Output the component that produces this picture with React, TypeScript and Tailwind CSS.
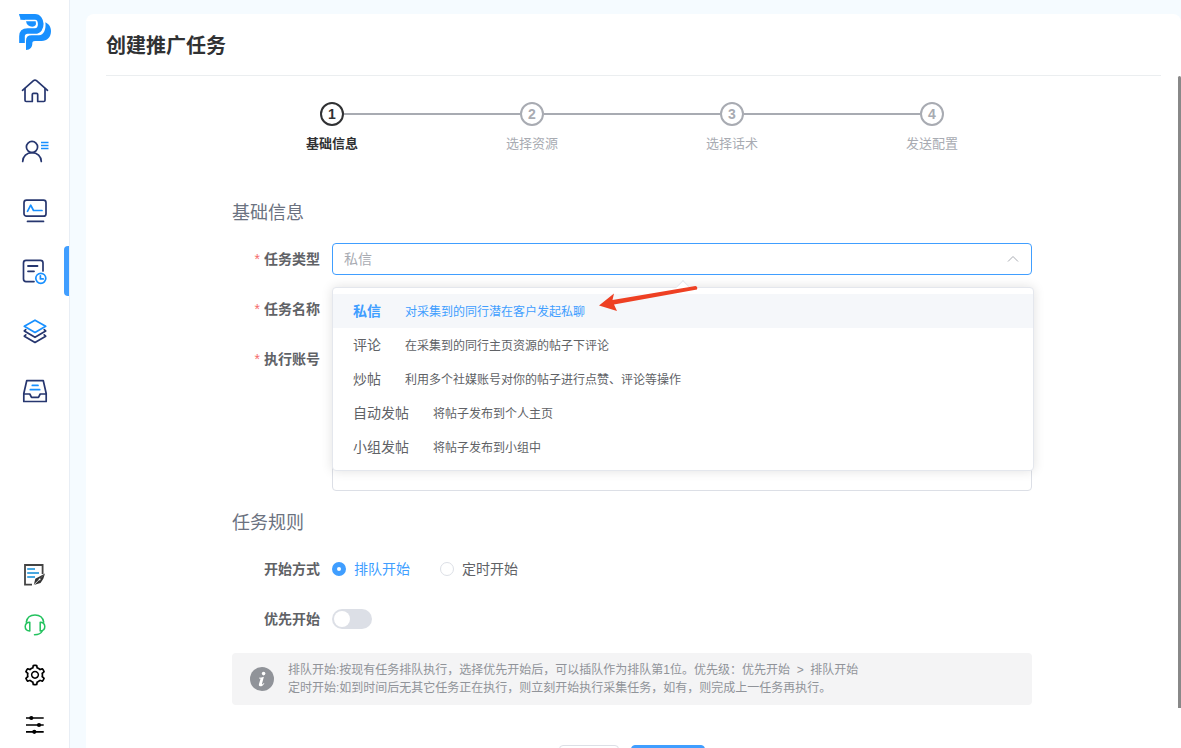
import { useState } from "react";
import type { ReactNode } from "react";
import { AiOutlineSetting } from "react-icons/ai";

const NAVY = "#26366f";
const BLUE = "#1890ff";

const Icon = ({ children }: { children: ReactNode }) => (
  <svg
    className="size-8"
    viewBox="0 0 32 32"
    fill="none"
    stroke={NAVY}
    strokeWidth="1.7"
    strokeLinecap="round"
    strokeLinejoin="round"
    aria-hidden="true"
  >
    {children}
  </svg>
);

const Logo = () => (
  <svg className="h-11 w-10" viewBox="0 0 120 132" fill={BLUE} aria-hidden="true">
    <path
      d="M16 20.5H60C82 20.5 84 63 60 63H38Q21 63 21 79V99"
      fill="none"
      stroke={BLUE}
      strokeWidth="17"
    />
    <path d="M12 12H30V29H26Q14 28 12 12Z" />
    <path d="M33 34H62Q66 50 52 50Q36 50 33 34Z" />
    <path d="M91 37C101 42 108 50 108 63C108 82 96 93 80 93H60Q52 93 52 100C52 112 46 120 33 120V92Q33 76 50 76H72C86 76 94 58 91 37Z" />
  </svg>
);

const mainNav = [
  {
    label: "首页",
    icon: (
      <Icon>
        <path d="M3.5 15.3 14.5 5.7Q16 4.5 17.5 5.7L28.5 15.3" />
        <path d="M6 13.5V25.3Q6 26.5 7.2 26.5H13.3V19.5Q13.3 18.3 14.5 18.3H17.5Q18.7 18.3 18.7 19.5V26.5H24.8Q26 26.5 26 25.3V13.5" />
      </Icon>
    ),
  },
  {
    label: "账号",
    icon: (
      <Icon>
        <circle cx="13" cy="12" r="5.6" />
        <path d="M3.7 26.5C3.7 21.5 7.8 17.6 13 17.6S22.3 21.5 22.3 26.5" />
        <path d="M22 7.5H29.5M22 10.5H29.5M22 13.5H29.5" stroke={BLUE} strokeWidth="1.3" strokeLinecap="butt" />
      </Icon>
    ),
  },
  {
    label: "监控",
    icon: (
      <Icon>
        <rect x="5" y="5.2" width="22" height="16" rx="2.5" />
        <path d="M8.5 26.4H24.5" />
        <path d="M8.5 16.3 11.7 10.2 14.5 15.5H23" stroke={BLUE} />
      </Icon>
    ),
  },
  {
    label: "任务",
    active: true,
    icon: (
      <Icon>
        <path d="M15 26.6H7Q4.5 26.6 4.5 24.1V7.9Q4.5 5.4 7 5.4H21.5Q24 5.4 24 7.9V16" />
        <path d="M9 11H18.5M9 16.3H15" strokeWidth="1.8" />
        <circle cx="21.8" cy="23.3" r="5" stroke={BLUE} />
        <path d="M21.4 20.8V23.9H24.2" stroke={BLUE} />
      </Icon>
    ),
  },
  {
    label: "资源",
    icon: (
      <Icon>
        <path d="M6.8 19.9 5.3 21.2 16 27.5 26.7 21.2 25.2 19.9" />
        <path d="M6.8 14.7 5.3 16 16 22.3 26.7 16 25.2 14.7" />
        <path d="M16 5.2 26.7 11.3 16 17.4 5.3 11.3Z" stroke={BLUE} />
      </Icon>
    ),
  },
  {
    label: "收件箱",
    icon: (
      <Icon>
        <path d="M7.7 5.7H24.3L27.2 18.5V26.5H4.8V18.5Z" />
        <path d="M4.8 19H10.8L12.5 22.3H19.5L21.2 19H27.2" />
        <path d="M13.3 10.4H19M11.3 14.7H20.7" stroke={BLUE} />
      </Icon>
    ),
  },
];

const toolNav = [
  {
    label: "编辑",
    icon: (
      <Icon>
        <path d="M13 25.7H6V6H23.6V15" stroke="#444" strokeLinecap="butt" strokeLinejoin="miter" strokeWidth="1.8" />
        <path d="M8.2 10H16M8.2 14H20M8.2 18H16" stroke="#4aa8e0" strokeLinecap="butt" strokeWidth="1.9" />
        <path d="M26 14.5 14.8 26 16.3 19.8 20.5 17.5Z" fill="#333" stroke="none" />
        <path d="M26 14.5 14.8 26 21.5 24 24.3 19.8Z" fill="#333" stroke="none" />
        <path d="M15 25.8 20.3 20.6" stroke="#fff" strokeWidth="0.7" />
        <circle cx="20.6" cy="20.4" r="0.9" fill="#fff" stroke="none" />
      </Icon>
    ),
  },
  {
    label: "客服",
    icon: (
      <Icon>
        <g stroke="#23c25e" strokeWidth="1.5">
          <path d="M7.3 13.2C8 9 11.3 6.1 16 6.1S24 9 24.7 13.2" />
          <path d="M10.8 13.2V22C8 22 6.2 20.3 6.2 17.6S8 13.2 10.8 13.2Z" />
          <path d="M21.2 13.2V22C24 22 25.8 20.3 25.8 17.6S24 13.2 21.2 13.2Z" />
          <path d="M23.2 22C22 24.8 19.5 25.7 15.5 25.7" />
        </g>
      </Icon>
    ),
  },
  { label: "设置", icon: <AiOutlineSetting className="size-6 text-black" aria-hidden="true" /> },
  {
    label: "偏好",
    icon: (
      <Icon>
        <path d="M7 9H24.7M7 16H24.7M7 22.8H24.7" stroke="#000" strokeLinecap="butt" />
        <g fill="#000" stroke="none">
          <circle cx="12.3" cy="9" r="2.1" />
          <circle cx="20" cy="16" r="2.1" />
          <circle cx="15.3" cy="22.8" r="2.1" />
        </g>
      </Icon>
    ),
  },
];

const steps = ["基础信息", "选择资源", "选择话术", "发送配置"];

const taskTypes = [
  { name: "私信", desc: "对采集到的同行潜在客户发起私聊" },
  { name: "评论", desc: "在采集到的同行主页资源的帖子下评论" },
  { name: "炒帖", desc: "利用多个社媒账号对你的帖子进行点赞、评论等操作" },
  { name: "自动发帖", desc: "将帖子发布到个人主页" },
  { name: "小组发帖", desc: "将帖子发布到小组中" },
];

const Sidebar = () => (
  <nav className="flex w-[70px] shrink-0 flex-col border-r border-[#e8eef5] bg-white">
    <a href="#" aria-label="主页" className="flex h-[61px] items-center justify-center pt-0.5">
      <Logo />
    </a>
    {mainNav.map((item) => (
      <a key={item.label} href="#" aria-label={item.label} className="relative flex h-15 items-center justify-center">
        {item.icon}
        {item.active && <span className="absolute right-0 h-[50px] w-[5px] rounded-l bg-[#409eff]" />}
      </a>
    ))}
    <div className="mt-auto -mb-0.5">
      {toolNav.map((item) => (
        <a key={item.label} href="#" aria-label={item.label} className="flex h-[50px] items-center justify-center">
          {item.icon}
        </a>
      ))}
    </div>
  </nav>
);

const Steps = () => (
  <ol className="mb-[37px] grid grid-cols-4">
    {steps.map((step, i) => (
      <li key={step} className={i === 0 ? "text-[#303133]" : "text-[#a8abb2]"}>
        <div className="flex items-center">
          <span className={`h-0.5 flex-1 ${i > 0 ? "bg-[#a8abb2]" : ""}`} />
          <span className="flex size-6 items-center justify-center rounded-full border-2 border-current text-sm font-bold">
            {i + 1}
          </span>
          <span className={`h-0.5 flex-1 ${i < steps.length - 1 ? "bg-[#a8abb2]" : ""}`} />
        </div>
        <p className={`text-center text-[13px] leading-9 ${i === 0 ? "font-bold" : ""}`}>{step}</p>
      </li>
    ))}
  </ol>
);

const SectionTitle = ({ children }: { children: ReactNode }) => (
  <h2 className="mb-[17px] pt-px text-lg leading-[26px] text-[#6b7280]">{children}</h2>
);

type FieldProps = { label: string; htmlFor?: string; required?: boolean; children: ReactNode };

const Field = ({ label, htmlFor, required, children }: FieldProps) => (
  <div className="mb-[18px] flex">
    <label htmlFor={htmlFor} className="w-[100px] shrink-0 pr-3 text-right text-sm leading-8 font-bold text-[#606266]">
      {required && <span className="mr-1 font-normal text-[#f56c6c]">*</span>}
      {label}
    </label>
    <div className="relative flex min-h-8 flex-1 items-center">{children}</div>
  </div>
);

const TaskTypeMenu = ({ value, onSelect }: { value: string; onSelect: (name: string) => void }) => (
  <div className="absolute top-11 left-0 z-10 w-[calc(100%+2px)] rounded border border-[#e4e7ed] bg-white py-[6px] shadow-[0_0_12px_rgba(0,0,0,0.12)]">
    <span className="absolute -top-[6px] left-1/2 size-[10px] -translate-x-1/2 rotate-45 border-t border-l border-[#e4e7ed] bg-white" />
    <ul role="listbox" aria-label="任务类型" className="relative bg-white">
      {taskTypes.map((type) => (
        <li
          key={type.name}
          role="option"
          aria-selected={type.name === value}
          onClick={() => onSelect(type.name)}
          className={`flex h-[34px] cursor-pointer items-baseline gap-6 px-5 text-sm leading-[34px] ${
            type.name === value ? "bg-[#f5f7fa] text-[#409eff]" : "text-[#606266]"
          }`}
        >
          <span className={type.name === value ? "font-bold" : ""}>{type.name}</span>
          <span className="text-xs leading-[34px]">{type.desc}</span>
        </li>
      ))}
    </ul>
    <svg className="absolute -top-1 left-[264px] h-8 w-[104px]" viewBox="0 0 104 32" fill="#ee4023" aria-hidden="true">
      <path d="M2 21.5 17 9.5 15.5 16 98.5 2Q101 2.5 100 5.5L17 20.5 20 27Z" />
    </svg>
  </div>
);

const App = () => {
  const [taskType, setTaskType] = useState("私信");
  const [start, setStart] = useState("queue");

  const radios = [
    { id: "queue", label: "排队开始" },
    { id: "timed", label: "定时开始" },
  ];

  return (
    <div className="flex h-screen overflow-hidden bg-[#f5fbff] font-['Liberation_Sans','Noto_Sans_CJK_SC',sans-serif] text-[#303133]">
      <Sidebar />
      <main className="mt-[14px] ml-4 flex min-w-0 flex-1 flex-col rounded-t-lg bg-white">
        <header className="mx-5 border-b border-[#ebeef0] pt-[18px] pb-[14px]">
          <h1 className="text-xl leading-[29px] font-bold">创建推广任务</h1>
        </header>

        <div className="flex min-h-0 flex-1">
          <div className="min-w-0 flex-1 overflow-y-auto px-5 pt-[26px] pb-5 [scrollbar-width:none]">
            <div className="mx-auto max-w-[800px]">
              <Steps />

              <SectionTitle>基础信息</SectionTitle>
              <Field label="任务类型" htmlFor="task-type" required>
                <select
                  id="task-type"
                  value={taskType}
                  onChange={(e) => setTaskType(e.target.value)}
                  className="h-8 w-full appearance-none rounded border border-[#409eff] bg-white px-[11px] text-sm text-[#a8abb2] outline-none"
                >
                  {taskTypes.map((type) => (
                    <option key={type.name}>{type.name}</option>
                  ))}
                </select>
                <svg
                  className="pointer-events-none absolute right-3 size-[14px]"
                  viewBox="0 0 14 14"
                  fill="none"
                  stroke="#a8abb2"
                  aria-hidden="true"
                >
                  <path d="M2 9.5 7 4.5 12 9.5" />
                </svg>
                <TaskTypeMenu value={taskType} onSelect={setTaskType} />
              </Field>
              <Field label="任务名称" htmlFor="task-name" required>
                <input id="task-name" className="h-8 w-full rounded border border-[#dcdfe6] px-[11px] text-sm" />
              </Field>
              <Field label="执行账号" htmlFor="accounts" required>
                <textarea id="accounts" className="h-[148px] w-full resize-none rounded border border-[#dcdfe6] p-2 text-sm" />
              </Field>

              <SectionTitle>任务规则</SectionTitle>
              <Field label="开始方式">
                {radios.map((radio) => (
                  <label
                    key={radio.id}
                    className={`mr-[30px] flex items-center gap-2 text-sm ${
                      start === radio.id ? "text-[#409eff]" : "text-[#606266]"
                    }`}
                  >
                    <input
                      type="radio"
                      name="start"
                      checked={start === radio.id}
                      onChange={() => setStart(radio.id)}
                      className="size-[14px] appearance-none rounded-full border border-[#dcdfe6] bg-white checked:border-[5px] checked:border-[#409eff]"
                    />
                    {radio.label}
                  </label>
                ))}
              </Field>
              <Field label="优先开始" htmlFor="priority">
                <input
                  id="priority"
                  type="checkbox"
                  role="switch"
                  className="h-5 w-10 appearance-none rounded-full bg-[#dcdfe6] p-0.5 before:block before:size-4 before:rounded-full before:bg-white checked:bg-[#409eff] checked:before:ml-5"
                />
              </Field>

              <div className="flex items-center gap-[14px] rounded bg-[#f4f4f5] px-[18px] py-2 text-xs leading-[18px] text-[#909399]">
                <svg className="size-6 shrink-0" viewBox="0 0 24 24" aria-hidden="true">
                  <circle cx="12" cy="12" r="12" fill="#909399" />
                  <circle cx="13.6" cy="6.6" r="1.8" fill="#fff" />
                  <path
                    d="M9 10.8C10.8 10.6 12.2 10.2 13.9 9.7L12 16.8C11.8 17.7 12.4 17.7 13.8 16L14.4 16.5C12.8 18.8 11.6 19.4 10.2 19.3C8.8 19.2 8.7 18.2 9 17L10.4 12.2C10.6 11.5 10 11.5 9 11.5Z"
                    fill="#fff"
                  />
                </svg>
                <div>
                  <p>排队开始:按现有任务排队执行，选择优先开始后，可以插队作为排队第1位。优先级：优先开始 &nbsp;&gt;&nbsp; 排队开始</p>
                  <p>定时开始:如到时间后无其它任务正在执行，则立刻开始执行采集任务，如有，则完成上一任务再执行。</p>
                </div>
              </div>

              <div className="mt-10 flex justify-center gap-3">
                <button className="h-8 rounded border border-[#dcdfe6] px-[15px] text-sm text-[#606266]">取消</button>
                <button className="h-8 rounded border border-[#409eff] bg-[#409eff] px-[15px] text-sm text-white">下一步</button>
              </div>
            </div>
          </div>
          <div className="w-[3px] shrink-0">
            <div className="h-[94%] rounded-t bg-[#888]" />
          </div>
        </div>
      </main>
    </div>
  );
};

export default App;
